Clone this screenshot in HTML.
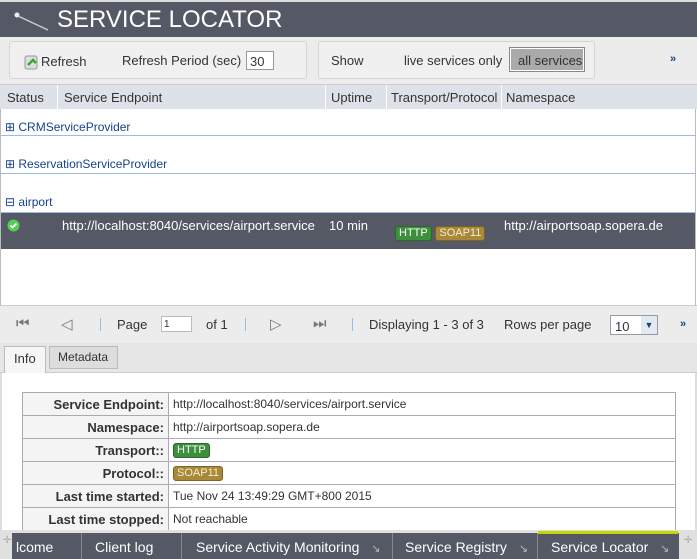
<!DOCTYPE html>
<html><head><meta charset="utf-8"><style>
*{box-sizing:border-box;margin:0;padding:0}
body{width:697px;height:559px;overflow:hidden;background:#fff;font-family:"Liberation Sans",sans-serif;font-size:13px;color:#333;position:relative}
.a{position:absolute;white-space:nowrap}
.badge{display:inline-block;font-size:11px;padding:0 3px;border-radius:3px;color:#fff;line-height:13px}
.http{background:#3c8f3c;border:1px solid #2a6a2a}
.soap{background:#a8893a;border:1px solid #7d6424;color:#f4ecd0}
.tbl td{border:1px solid #a9aab5;height:23px;font-size:12px;padding:0 4px}
.tbl td.l{text-align:right;font-weight:bold;background:#f4f4f4;color:#333;width:146px;font-size:13px}
</style></head><body>
<div class="a" style="left:0;top:0;width:697px;height:37px;background:#545965;border-top:2px solid #ddd"></div>
<svg class="a" style="left:14px;top:12px" width="36" height="20"><circle cx="3" cy="3" r="2.5" fill="#eee"/><line x1="4" y1="4" x2="34" y2="18" stroke="#ccc" stroke-width="1.5"/></svg>
<div class="a" style="left:57px;top:6px;color:#fff;font-size:24px;">SERVICE LOCATOR</div>
<div class="a" style="left:0;top:37px;width:697px;height:48px;background:#ececec;border-bottom:1px solid #ccc"></div>
<div class="a" style="left:9px;top:41px;width:298px;height:38px;border:1px solid #d5d5d5;border-radius:3px;background:#f0f0f0"></div>
<div class="a" style="left:318px;top:41px;width:277px;height:38px;border:1px solid #d5d5d5;border-radius:3px;background:#f0f0f0"></div>
<svg class="a" style="left:24px;top:55px" width="16" height="15"><rect x="1" y="1" width="12" height="13" rx="2" fill="#ddd" stroke="#999"/><path d="M4 10 l5 -5 l3 3" stroke="#3a3" stroke-width="2.5" fill="none"/></svg>
<div class="a" style="left:41px;top:54px">Refresh</div>
<div class="a" style="left:122px;top:53px">Refresh Period (sec)</div>
<div class="a" style="left:246px;top:51px;width:28px;height:19px;border:1px solid #999;background:#fff;padding:2px 3px">30</div>
<div class="a" style="left:331px;top:53px">Show</div>
<div class="a" style="left:404px;top:53px">live services only</div>
<div class="a" style="left:510px;top:48px;width:74px;height:23px;border:1px solid #fff;outline:1px solid #888;background:#aaa;padding:4px 7px;color:#333">all services</div>
<div class="a" style="left:670px;top:53px;color:#15428b;font-weight:bold;font-size:11px">»</div>
<div class="a" style="left:0;top:85px;width:697px;height:24px;background:#dde1e8"></div>
<div class="a" style="left:57px;top:85px;width:1px;height:24px;background:#fff"></div>
<div class="a" style="left:325px;top:85px;width:1px;height:24px;background:#fff"></div>
<div class="a" style="left:386px;top:85px;width:1px;height:24px;background:#fff"></div>
<div class="a" style="left:501px;top:85px;width:1px;height:24px;background:#fff"></div>
<div class="a" style="left:7px;top:90px">Status</div>
<div class="a" style="left:64px;top:90px">Service Endpoint</div>
<div class="a" style="left:331px;top:90px">Uptime</div>
<div class="a" style="left:391px;top:90px">Transport/Protocol</div>
<div class="a" style="left:506px;top:90px">Namespace</div>
<div class="a" style="left:0;top:109px;width:1px;height:197px;background:#bbb"></div>
<div class="a" style="left:695px;top:109px;width:1px;height:197px;background:#bbb"></div>
<div class="a" style="left:5px;top:120px;color:#15428b;font-size:12px">⊞ CRMServiceProvider</div>
<div class="a" style="left:1px;top:135px;width:694px;height:1px;background:#99bbe8"></div>
<div class="a" style="left:5px;top:157px;color:#15428b;font-size:12px">⊞ ReservationServiceProvider</div>
<div class="a" style="left:1px;top:173px;width:694px;height:1px;background:#99bbe8"></div>
<div class="a" style="left:5px;top:195px;color:#15428b;font-size:12px">⊟ airport</div>
<div class="a" style="left:1px;top:212px;width:694px;height:37px;background:#545965;border-top:1px solid #99bbe8"></div>
<svg class="a" style="left:7px;top:219px" width="13" height="13"><circle cx="6.5" cy="6.5" r="6" fill="#5c5"/><path d="M3.5 6.5 l2 2 l4 -4" stroke="#fff" stroke-width="1.8" fill="none"/></svg>
<div class="a" style="left:62px;top:218px;color:#fff">http://localhost:8040/services/airport.service</div>
<div class="a" style="left:329px;top:218px;color:#fff">10 min</div>
<div class="a" style="left:395px;top:224px"><span class="badge http">HTTP</span> <span class="badge soap">SOAP11</span></div>
<div class="a" style="left:504px;top:218px;color:#fff">http://airportsoap.sopera.de</div>
<div class="a" style="left:0;top:305px;width:697px;height:39px;background:#ececec;border-top:1px solid #ccc"></div>
<div class="a" style="left:16px;top:315px;color:#777;font-size:15px">⏮</div>
<div class="a" style="left:61px;top:315px;color:#777;font-size:15px">◁</div>
<div class="a" style="left:100px;top:318px;width:1px;height:13px;background:#99bbe8"></div>
<div class="a" style="left:117px;top:317px">Page</div>
<div class="a" style="left:161px;top:316px;width:31px;height:16px;border:1px solid #bbb;background:#fff;font-size:10px;padding:2px">1</div>
<div class="a" style="left:206px;top:317px">of 1</div>
<div class="a" style="left:245px;top:318px;width:1px;height:13px;background:#99bbe8"></div>
<div class="a" style="left:270px;top:315px;color:#777;font-size:15px">▷</div>
<div class="a" style="left:313px;top:315px;color:#777;font-size:15px">⏭</div>
<div class="a" style="left:352px;top:318px;width:1px;height:13px;background:#99bbe8"></div>
<div class="a" style="left:369px;top:317px">Displaying 1 - 3 of 3</div>
<div class="a" style="left:504px;top:317px">Rows per page</div>
<div class="a" style="left:610px;top:315px;width:48px;height:20px;border:1px solid #99a;background:#fff;padding:3px 4px">10<span style="position:absolute;right:0;top:0;width:16px;height:18px;background:#e4e8f0;color:#15428b;font-size:9px;text-align:center;line-height:18px">▼</span></div>
<div class="a" style="left:680px;top:318px;color:#15428b;font-weight:bold;font-size:11px">»</div>
<div class="a" style="left:0;top:343px;width:697px;height:30px;background:#e6e6e6;border-bottom:1px solid #ccc"></div>
<div class="a" style="left:4px;top:346px;width:42px;height:27px;background:#f6f6f6;border:1px solid #bbb;border-bottom:none;padding:4px 9px">Info</div>
<div class="a" style="left:49px;top:346px;width:69px;height:23px;background:#ddd;border:1px solid #bbb;padding:3px 8px;font-size:12px">Metadata</div>
<div class="a" style="left:0;top:373px;width:2px;height:160px;background:#ddd"></div>
<div class="a" style="left:695px;top:373px;width:2px;height:160px;background:#ddd"></div>
<table class="a tbl" style="left:22px;top:392px;width:654px;border-collapse:collapse">
<tr><td class="l">Service Endpoint:</td><td>http://localhost:8040/services/airport.service</td></tr>
<tr><td class="l">Namespace:</td><td>http://airportsoap.sopera.de</td></tr>
<tr><td class="l">Transport::</td><td><span class="badge http">HTTP</span></td></tr>
<tr><td class="l">Protocol::</td><td><span class="badge soap">SOAP11</span></td></tr>
<tr><td class="l">Last time started:</td><td>Tue Nov 24 13:49:29 GMT+800 2015</td></tr>
<tr><td class="l">Last time stopped:</td><td>Not reachable</td></tr>
</table>
<div class="a" style="left:0;top:530px;width:697px;height:29px;background:#e0e0e0"></div>
<div class="a" style="left:12px;top:533px;width:667px;height:26px;background:#545965"></div>
<div class="a" style="left:3px;top:535px;color:#aaa;font-size:10px">✛</div>
<div class="a" style="left:684px;top:535px;color:#aaa;font-size:10px">✛</div>
<div class="a" style="left:81px;top:533px;width:1px;height:26px;background:#888"></div>
<div class="a" style="left:181px;top:533px;width:1px;height:26px;background:#888"></div>
<div class="a" style="left:392px;top:533px;width:1px;height:26px;background:#888"></div>
<div class="a" style="left:537px;top:533px;width:1px;height:26px;background:#888"></div>
<div class="a" style="left:538px;top:531px;width:140px;height:3px;background:#c6d600"></div>
<div class="a" style="left:16px;top:539px;color:#fff;font-size:14px">lcome</div>
<div class="a" style="left:95px;top:539px;color:#fff;font-size:14px">Client log</div>
<div class="a" style="left:196px;top:539px;color:#fff;font-size:14px">Service Activity Monitoring <span style="color:#bbb;font-size:11px;margin-left:8px">↘</span></div>
<div class="a" style="left:405px;top:539px;color:#fff;font-size:14px">Service Registry <span style="color:#bbb;font-size:11px;margin-left:8px">↘</span></div>
<div class="a" style="left:551px;top:539px;color:#fff;font-size:14px">Service Locator <span style="color:#bbb;font-size:11px;margin-left:8px">↘</span></div>
</body></html>
